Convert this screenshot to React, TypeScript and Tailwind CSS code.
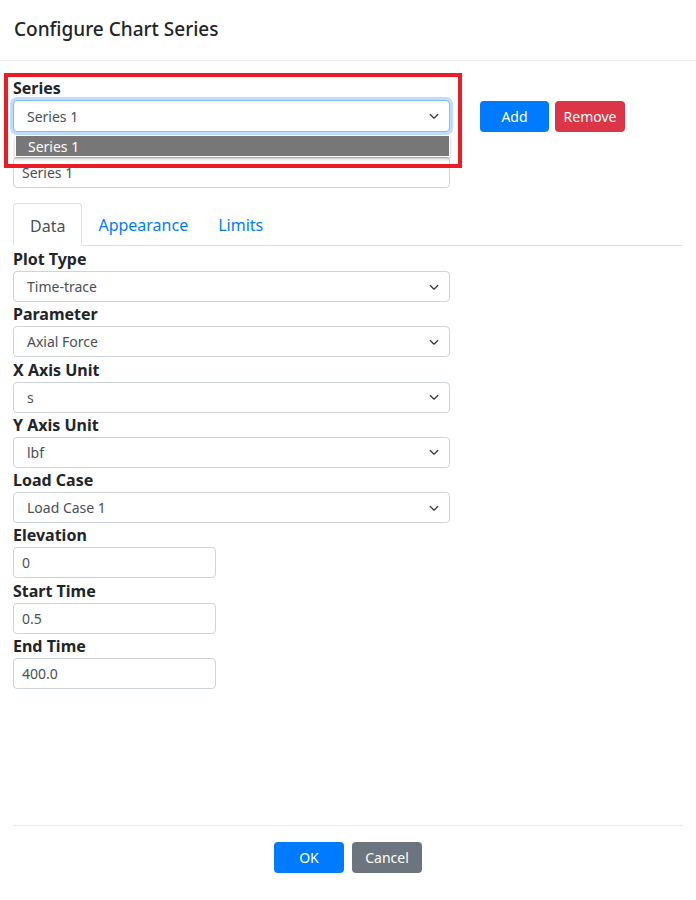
import React from 'react'

const font = { fontFamily: '"Noto Sans", "Open Sans", sans-serif' }

function Chevron() {
  return (
    <svg viewBox="0 0 16 16" className="w-[10px] h-[10px] text-[#343a40]" fill="none">
      <path d="M2 5.5l6 6 6-6" stroke="currentColor" strokeWidth="2" strokeLinecap="round" strokeLinejoin="round" />
    </svg>
  )
}

function SelectBox({ value, focused = false, children }: { value: string; focused?: boolean; children?: React.ReactNode }) {
  return (
    <div
      className={`relative h-[31px] w-[437px] flex items-center justify-between pl-[13px] pr-[10px] rounded-[4px] border bg-white text-[14px] text-[#495057] ${
        focused
          ? 'h-[32px] border-[#80bdff] shadow-[0_0_0_3px_rgba(0,123,255,0.25)]'
          : 'border-[#ced4da]'
      }`}
    >
      <span>{value}</span>
      <Chevron />
      {children}
    </div>
  )
}

function TextBox({ value, wide = false }: { value: string; wide?: boolean }) {
  return (
    <div
      className={`h-[31px] ${wide ? 'w-[437px]' : 'w-[203px]'} flex items-center px-[8px] rounded-[4px] border border-[#ced4da] bg-white text-[14px] text-[#495057]`}
    >
      {value}
    </div>
  )
}

function Field({ label, children }: { label: string; children: React.ReactNode }) {
  return (
    <div className="flex flex-col">
      <label className="leading-6 text-[16px] font-bold text-[#212529]">{label}</label>
      {children}
    </div>
  )
}

export default function App() {
  const selects = [
    { label: 'Plot Type', value: 'Time-trace' },
    { label: 'Parameter', value: 'Axial Force' },
    { label: 'X Axis Unit', value: 's' },
    { label: 'Y Axis Unit', value: 'lbf' },
    { label: 'Load Case', value: 'Load Case 1' },
  ]
  const inputs = [
    { label: 'Elevation', value: '0' },
    { label: 'Start Time', value: '0.5' },
    { label: 'End Time', value: '400.0' },
  ]

  return (
    <div className="relative w-[696px] h-[900px] bg-white text-[#212529]" style={font}>
      <header className="h-[61px] flex items-center px-[14px] border-b border-[#e9ecef]">
        <h5 className="text-[19px] font-medium leading-tight -mt-px">Configure Chart Series</h5>
      </header>

      <div className="h-[764px] px-[13px] pt-[15px]">
        <div className="flex items-end gap-[30px]">
          <div className="flex flex-col">
            <label className="leading-6 text-[16px] font-bold">Series</label>
            <SelectBox value="Series 1" focused>
              <div className="absolute left-px top-[34px] w-[435px] bg-white p-px shadow-[0_2px_3px_rgba(0,0,0,0.25)] z-10">
                <div className="h-[20px] flex items-center pl-[12px] bg-[#777777] text-white text-[14px]">Series 1</div>
              </div>
            </SelectBox>
          </div>
          <div className="flex gap-[6px]">
            <button className="w-[69px] h-[31px] rounded-[4px] bg-[#007bff] text-white text-[14px]">Add</button>
            <button className="w-[70px] h-[31px] rounded-[4px] bg-[#dc3545] text-white text-[14px]">Remove</button>
          </div>
        </div>

        <div className="mt-[25px]">
          <TextBox value="Series 1" wide />
        </div>

        <nav className="mt-[15px] flex border-b border-[#dee2e6]">
          <div className="-mb-px h-[43px] pt-[2px] px-[16px] flex items-center border border-[#dee2e6] border-b-white rounded-t-[4px] bg-white text-[16px] text-[#495057]">
            Data
          </div>
          <div className="h-[42px] pt-[2px] px-[16px] flex items-center text-[16px] text-[#007bff]">Appearance</div>
          <div className="h-[42px] pt-[2px] px-[14px] flex items-center text-[16px] text-[#007bff]">Limits</div>
        </nav>

        <div className="flex flex-col gap-[0.3px] pt-px">
          {selects.map((s) => (
            <Field key={s.label} label={s.label}>
              <SelectBox value={s.value} />
            </Field>
          ))}
          {inputs.map((s) => (
            <Field key={s.label} label={s.label}>
              <TextBox value={s.value} />
            </Field>
          ))}
        </div>
      </div>

      <footer className="mx-[13px] border-t border-[#e9ecef] pt-[16px] flex justify-center gap-[8px]">
        <button className="w-[70px] h-[31px] rounded-[4px] bg-[#007bff] text-white text-[14px]">OK</button>
        <button className="w-[70px] h-[31px] rounded-[4px] bg-[#6c757d] text-white text-[14px]">Cancel</button>
      </footer>

      <div className="absolute left-[4px] top-[73px] w-[458px] h-[95px] border-[4px] border-[#ec1c24] pointer-events-none" />
    </div>
  )
}
